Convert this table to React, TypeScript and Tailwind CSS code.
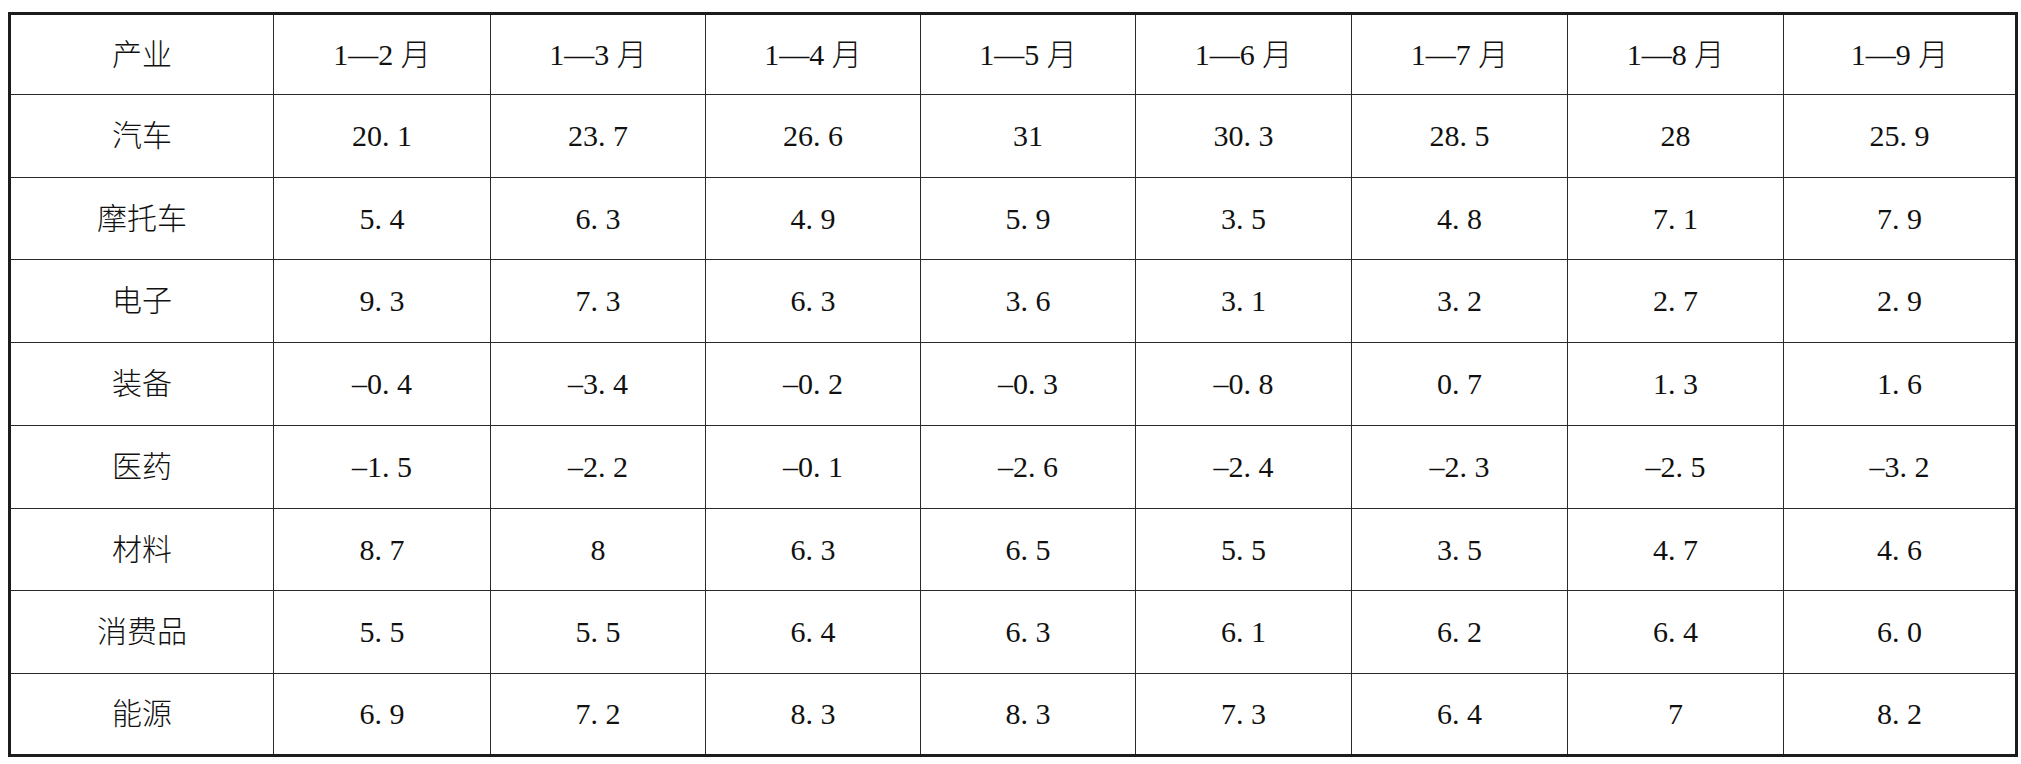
const columns = ["产业", "1—2 月", "1—3 月", "1—4 月", "1—5 月", "1—6 月", "1—7 月", "1—8 月", "1—9 月"];

const rows: [string, string[]][] = [
  ["汽车", ["20. 1", "23. 7", "26. 6", "31", "30. 3", "28. 5", "28", "25. 9"]],
  ["摩托车", ["5. 4", "6. 3", "4. 9", "5. 9", "3. 5", "4. 8", "7. 1", "7. 9"]],
  ["电子", ["9. 3", "7. 3", "6. 3", "3. 6", "3. 1", "3. 2", "2. 7", "2. 9"]],
  ["装备", ["–0. 4", "–3. 4", "–0. 2", "–0. 3", "–0. 8", "0. 7", "1. 3", "1. 6"]],
  ["医药", ["–1. 5", "–2. 2", "–0. 1", "–2. 6", "–2. 4", "–2. 3", "–2. 5", "–3. 2"]],
  ["材料", ["8. 7", "8", "6. 3", "6. 5", "5. 5", "3. 5", "4. 7", "4. 6"]],
  ["消费品", ["5. 5", "5. 5", "6. 4", "6. 3", "6. 1", "6. 2", "6. 4", "6. 0"]],
  ["能源", ["6. 9", "7. 2", "8. 3", "8. 3", "7. 3", "6. 4", "7", "8. 2"]],
];

const rowHeights = ["h-[83px]", "h-[82px]", "h-[83px]", "h-[83px]", "h-[83px]", "h-[82px]", "h-[83px]", "h-[81px]"];

function Cell({ children, first }: { children: React.ReactNode; first?: boolean }) {
  return (
    <div className={`flex items-center justify-center ${first ? "" : "border-l border-[#2a2a2a]"}`}>
      {children}
    </div>
  );
}

export default function App() {
  return (
    <div className="w-[2021px] h-[764px] bg-white pl-[8px] pt-[12px]" style={{ fontFamily: '"Liberation Serif", "Noto Sans CJK SC", serif' }}>
      <div className="w-[2010px] h-[745px] border-[3px] border-[#1c1c1c] text-[30px] text-[#111] leading-none font-light">
        <div className="grid grid-cols-[262px_217px_215px_215px_215px_216px_216px_216px_1fr] h-[79px]">
          {columns.map((c, i) => (
            <Cell key={c} first={i === 0}>
              <span className="whitespace-pre">{c}</span>
            </Cell>
          ))}
        </div>
        {rows.map(([name, values], r) => (
          <div
            key={name}
            className={`grid grid-cols-[262px_217px_215px_215px_215px_216px_216px_216px_1fr] border-t border-[#2a2a2a] ${rowHeights[r]}`}
          >
            <Cell first>{name}</Cell>
            {values.map((v, i) => (
              <Cell key={i}>
                <span className="whitespace-pre">{v}</span>
              </Cell>
            ))}
          </div>
        ))}
      </div>
    </div>
  );
}
